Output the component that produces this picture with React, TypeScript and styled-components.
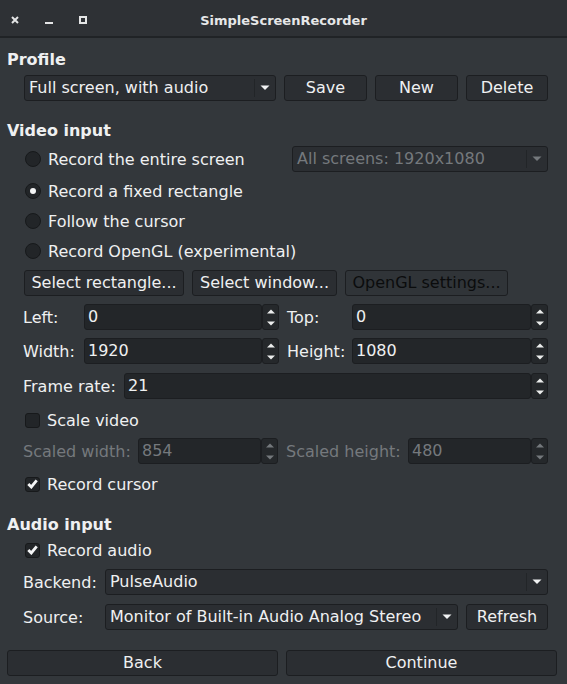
import React from "react";
import styled, { createGlobalStyle } from "styled-components";

const C = {
  bg: "#33373b",
  title: "#2e3135",
  titleLine: "#202326",
  btn: "#2b2e32",
  border: "#1c1e21",
  input: "#232629",
  box: "#222528",
  text: "#eff0f1",
  dis: "#75797d",
  disBtnText: "#0b0c0d",
};

const GlobalStyle = createGlobalStyle`
  html, body { margin: 0; padding: 0; background: ${C.bg}; }
  * { box-sizing: border-box; }
`;

const Window = styled.div`
  width: 567px;
  height: 684px;
  background: ${C.bg};
  color: ${C.text};
  font-family: "DejaVu Sans", sans-serif;
  font-size: 16px;
  display: flex;
  flex-direction: column;
  overflow: hidden;
`;

const TitleBar = styled.div`
  height: 38px;
  padding-top: 4px;
  background: ${C.title};
  border-bottom: 2px solid ${C.titleLine};
  display: grid;
  grid-template-columns: 1fr auto 1fr;
  align-items: center;
`;

const Controls = styled.div`
  display: flex;
  align-items: center;
  gap: 26px;
  padding-left: 11px;
`;

const Title = styled.div`
  font-weight: bold;
  font-size: 13px;
  color: #e6e7e8;
`;

const Body = styled.div`
  display: flex;
  flex-direction: column;
  padding: 0 10px 0 7px;
`;

const Heading = styled.div<{ $mt: number }>`
  height: 22px;
  line-height: 22px;
  margin-top: ${(p) => p.$mt}px;
  font-weight: bold;
`;

const Indent = styled.div`
  display: flex;
  flex-direction: column;
  padding: 0 9px 0 17px;
`;

const Row = styled.div<{ $mt: number; $h?: number; $gap?: number; $between?: boolean }>`
  display: flex;
  align-items: center;
  height: ${(p) => p.$h ?? 26}px;
  margin-top: ${(p) => p.$mt}px;
  gap: ${(p) => p.$gap ?? 0}px;
  justify-content: ${(p) => (p.$between ? "space-between" : "flex-start")};
`;

const Button = styled.div<{ $w?: number; $disabled?: boolean; $grow?: boolean }>`
  height: 26px;
  width: ${(p) => (p.$w ? `${p.$w}px` : "auto")};
  flex: ${(p) => (p.$grow ? "1 1 0" : "0 0 auto")};
  background: ${(p) => (p.$disabled ? "#303438" : C.btn)};
  border: 1px solid ${C.border};
  border-radius: 3px;
  color: ${(p) => (p.$disabled ? C.disBtnText : C.text)};
  display: flex;
  align-items: center;
  justify-content: center;
  padding-bottom: 1px;
  white-space: nowrap;
`;

const ComboBox = styled.div<{ $w?: number; $disabled?: boolean }>`
  height: 26px;
  width: ${(p) => (p.$w ? `${p.$w}px` : "auto")};
  flex: ${(p) => (p.$w ? "0 0 auto" : "1 1 0")};
  background: ${C.btn};
  border: 1px solid ${C.border};
  border-radius: 3px;
  color: ${(p) => (p.$disabled ? C.dis : C.text)};
  display: flex;
  align-items: center;
`;

const ComboText = styled.div`
  flex: 1;
  padding-left: 4px;
  padding-bottom: 1px;
  white-space: nowrap;
  overflow: hidden;
`;

const ComboArrowBox = styled.div`
  width: 21px;
  height: 18px;
  border-left: 1px solid #222528;
  display: flex;
  align-items: center;
  justify-content: center;
`;

const Choice = styled.div`
  display: flex;
  align-items: center;
  gap: 7px;
  white-space: nowrap;
`;

const RadioCircle = styled.div<{ $checked?: boolean }>`
  width: 16px;
  height: 16px;
  border-radius: 50%;
  background: ${C.box};
  border: 1px solid #17191b;
  display: flex;
  align-items: center;
  justify-content: center;
  margin-left: 1px;
  &::after {
    content: "";
    display: ${(p) => (p.$checked ? "block" : "none")};
    width: 6px;
    height: 6px;
    border-radius: 50%;
    background: #f4f5f6;
  }
`;

const CheckBox = styled.div`
  width: 15px;
  height: 15px;
  margin-left: 1px;
  border-radius: 3px;
  background: ${C.box};
  border: 1px solid #17191b;
  display: flex;
  align-items: center;
  justify-content: center;
`;

const FieldLabel = styled.div<{ $w: number; $ml?: number; $disabled?: boolean }>`
  width: ${(p) => p.$w}px;
  flex: 0 0 auto;
  margin-left: ${(p) => p.$ml ?? -1}px;
  color: ${(p) => (p.$disabled ? C.dis : C.text)};
  white-space: nowrap;
`;

const Spin = styled.div<{ $w?: number }>`
  display: flex;
  height: 26px;
  width: ${(p) => (p.$w ? `${p.$w}px` : "auto")};
  flex: ${(p) => (p.$w ? "0 0 auto" : "1 1 0")};
`;

const SpinField = styled.div<{ $disabled?: boolean }>`
  flex: 1;
  background: ${C.input};
  border: 1px solid ${C.border};
  border-radius: 3px;
  padding-left: 3px;
  padding-bottom: 1px;
  display: flex;
  align-items: center;
  color: ${(p) => (p.$disabled ? C.dis : C.text)};
`;

const SpinButtons = styled.div`
  width: 17px;
  background: #25282b;
  border: 1px solid ${C.border};
  border-radius: 3px;
  display: flex;
  flex-direction: column;
  align-items: center;
  justify-content: center;
  gap: 7px;
`;

const Footer = styled.div`
  display: flex;
  gap: 8px;
  margin-top: 20px;
  height: 25px;
`;

const CloseIcon = () => (
  <svg width="8" height="8" viewBox="0 0 8 8">
    <path d="M1 1 L7 7 M7 1 L1 7" stroke="#e4e5e6" strokeWidth="2" />
  </svg>
);
const MinIcon = () => (
  <svg width="8" height="8" viewBox="0 0 8 8">
    <rect x="0" y="6" width="8" height="2" fill="#e4e5e6" />
  </svg>
);
const MaxIcon = () => (
  <svg width="8" height="8" viewBox="0 0 8 8">
    <rect x="1" y="1" width="6" height="6" fill="none" stroke="#e4e5e6" strokeWidth="2" />
  </svg>
);

const DownArrow = ({ color }: { color: string }) => (
  <svg width="10" height="6" viewBox="0 0 10 6">
    <polygon points="0.5,0.5 9.5,0.5 5,5" fill={color} />
  </svg>
);

const SpinArrow = ({ up, color }: { up?: boolean; color: string }) => (
  <svg width="8" height="5" viewBox="0 0 8 5">
    <polygon points={up ? "0,4.5 4,0.5 8,4.5" : "0,0.5 8,0.5 4,4.5"} fill={color} />
  </svg>
);

const CheckMark = () => (
  <svg width="11" height="10" viewBox="0 0 11 10">
    <path d="M1.3 5 L4.3 8 L9.7 1.3" fill="none" stroke="#f4f5f6" strokeWidth="2.8" />
  </svg>
);

const Combo = ({ text, w, disabled }: { text: string; w?: number; disabled?: boolean }) => (
  <ComboBox $w={w} $disabled={disabled}>
    <ComboText>{text}</ComboText>
    <ComboArrowBox>
      <DownArrow color={disabled ? C.dis : "#f1f2f3"} />
    </ComboArrowBox>
  </ComboBox>
);

const SpinBox = ({ value, w, disabled }: { value: string; w?: number; disabled?: boolean }) => {
  const col = disabled ? C.dis : "#eceded";
  return (
    <Spin $w={w}>
      <SpinField $disabled={disabled}>{value}</SpinField>
      <SpinButtons>
        <SpinArrow up color={col} />
        <SpinArrow color={col} />
      </SpinButtons>
    </Spin>
  );
};

const Radio = ({ label, checked }: { label: string; checked?: boolean }) => (
  <Choice>
    <RadioCircle $checked={checked} />
    <span>{label}</span>
  </Choice>
);

const Check = ({ label, checked }: { label: string; checked?: boolean }) => (
  <Choice>
    <CheckBox>{checked && <CheckMark />}</CheckBox>
    <span>{label}</span>
  </Choice>
);

export default function App() {
  return (
    <>
      <GlobalStyle />
      <Window>
        <TitleBar>
          <Controls>
            <CloseIcon />
            <MinIcon />
            <MaxIcon />
          </Controls>
          <Title>SimpleScreenRecorder</Title>
          <div />
        </TitleBar>
        <Body>
          <Heading $mt={11}>Profile</Heading>
          <Indent>
            <Row $mt={4} $gap={8}>
              <Combo text="Full screen, with audio" w={252} />
              <Button $w={83}>Save</Button>
              <Button $w={83}>New</Button>
              <Button $w={82}>Delete</Button>
            </Row>
          </Indent>

          <Heading $mt={19}>Video input</Heading>
          <Indent>
            <Row $mt={4} $between>
              <Radio label="Record the entire screen" />
              <Combo text="All screens: 1920x1080" w={256} disabled />
            </Row>
            <Row $mt={7} $h={24}>
              <Radio label="Record a fixed rectangle" checked />
            </Row>
            <Row $mt={6} $h={24}>
              <Radio label="Follow the cursor" />
            </Row>
            <Row $mt={6} $h={24}>
              <Radio label="Record OpenGL (experimental)" />
            </Row>
            <Row $mt={7} $gap={8}>
              <Button $w={160}>Select rectangle...</Button>
              <Button $w={145}>Select window...</Button>
              <Button $w={163} $disabled>
                OpenGL settings...
              </Button>
            </Row>
            <Row $mt={8}>
              <FieldLabel $w={61}>Left:</FieldLabel>
              <SpinBox value="0" w={195} />
              <FieldLabel $w={65} $ml={8}>
                Top:
              </FieldLabel>
              <SpinBox value="0" />
            </Row>
            <Row $mt={8}>
              <FieldLabel $w={61}>Width:</FieldLabel>
              <SpinBox value="1920" w={195} />
              <FieldLabel $w={65} $ml={8}>
                Height:
              </FieldLabel>
              <SpinBox value="1080" />
            </Row>
            <Row $mt={9}>
              <FieldLabel $w={101}>Frame rate:</FieldLabel>
              <SpinBox value="21" />
            </Row>
            <Row $mt={9} $h={24}>
              <Check label="Scale video" />
            </Row>
            <Row $mt={6}>
              <FieldLabel $w={115} $disabled>
                Scaled width:
              </FieldLabel>
              <SpinBox value="854" w={140} disabled />
              <FieldLabel $w={122} $ml={8} $disabled>
                Scaled height:
              </FieldLabel>
              <SpinBox value="480" disabled />
            </Row>
            <Row $mt={8} $h={24}>
              <Check label="Record cursor" checked />
            </Row>
          </Indent>

          <Heading $mt={18}>Audio input</Heading>
          <Indent>
            <Row $mt={2} $h={24}>
              <Check label="Record audio" checked />
            </Row>
            <Row $mt={7}>
              <FieldLabel $w={82}>Backend:</FieldLabel>
              <Combo text="PulseAudio" />
            </Row>
            <Row $mt={9} $gap={8}>
              <FieldLabel $w={74}>Source:</FieldLabel>
              <Combo text="Monitor of Built-in Audio Analog Stereo" w={353} />
              <Button $w={82}>Refresh</Button>
            </Row>
          </Indent>

          <Footer>
            <Button $grow>Back</Button>
            <Button $grow>Continue</Button>
          </Footer>
        </Body>
      </Window>
    </>
  );
}
